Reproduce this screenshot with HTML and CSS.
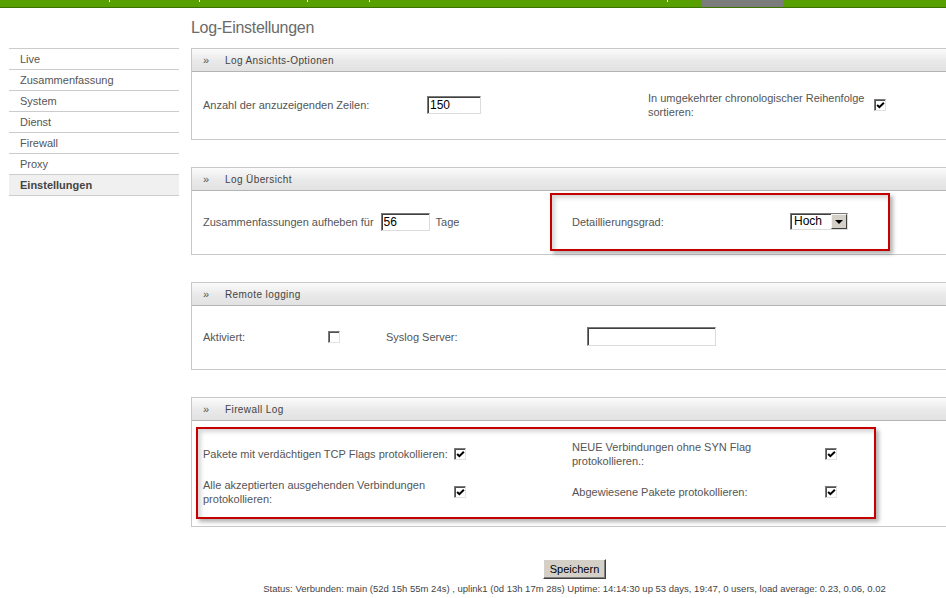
FILE: index.html
```html
<!DOCTYPE html>
<html lang="de">
<head>
    <meta charset="UTF-8">
    <title>Log-Einstellungen</title>
    <link rel="stylesheet" href="styles.css">
</head>
<body>
    <div class="topbar">
        <span class="seg tick"></span>
        <span class="seg tick"></span>
        <span class="seg tick"></span>
        <span class="seg tick"></span>
        <span class="seg tick"></span>
        <span class="seg"></span>
        <span class="seg active"></span>
        <span class="seg"></span>
    </div>

    <div class="page">
        <nav class="sidebar">
            <a href="#">Live</a>
            <a href="#">Zusammenfassung</a>
            <a href="#">System</a>
            <a href="#">Dienst</a>
            <a href="#">Firewall</a>
            <a href="#">Proxy</a>
            <a href="#" class="current">Einstellungen</a>
        </nav>

        <main class="content">
            <h1 class="page-title">Log-Einstellungen</h1>

            <section class="panel">
                <div class="panel-head"><span class="chev">&raquo;</span>Log Ansichts-Optionen</div>
                <div class="panel-body body-view">
                    <div class="row row-view">
                        <label>Anzahl der anzuzeigenden Zeilen:</label>
                        <span><input type="text" class="field field-lines" value="150"></span>
                        <label class="nowrap">In umgekehrter chronologischer Reihenfolge<br>sortieren:</label>
                        <span class="cb checked"><svg viewBox="0 0 8 8"><polyline points="1,3.5 3,5.5 7,1.5"/></svg></span>
                    </div>
                </div>
            </section>

            <section class="panel">
                <div class="panel-head"><span class="chev">&raquo;</span>Log &Uuml;bersicht</div>
                <div class="panel-body body-short">
                    <div class="row row-summary">
                        <div class="inline">
                            <label>Zusammenfassungen aufheben f&uuml;r</label>
                            <input type="text" class="field field-days" value="56">
                            <span>Tage</span>
                        </div>
                        <div class="marked marked-detail">
                            <label>Detaillierungsgrad:</label>
                            <span class="dropdown"><span class="dropdown-value">Hoch</span><span class="dropdown-btn"></span></span>
                        </div>
                    </div>
                </div>
            </section>

            <section class="panel">
                <div class="panel-head"><span class="chev">&raquo;</span>Remote logging</div>
                <div class="panel-body body-short">
                    <div class="row row-remote">
                        <label>Aktiviert:</label>
                        <span class="cb"></span>
                        <label>Syslog Server:</label>
                        <span><input type="text" class="field field-server" value=""></span>
                    </div>
                </div>
            </section>

            <section class="panel">
                <div class="panel-head"><span class="chev">&raquo;</span>Firewall Log</div>
                <div class="panel-body body-firewall">
                    <div class="marked marked-firewall">
                        <label>Pakete mit verd&auml;chtigen TCP Flags protokollieren:</label>
                        <span class="cb checked"><svg viewBox="0 0 8 8"><polyline points="1,3.5 3,5.5 7,1.5"/></svg></span>
                        <label class="nowrap">NEUE Verbindungen ohne SYN Flag<br>protokollieren.:</label>
                        <span class="cb checked"><svg viewBox="0 0 8 8"><polyline points="1,3.5 3,5.5 7,1.5"/></svg></span>

                        <label class="nowrap">Alle akzeptierten ausgehenden Verbindungen<br>protokollieren:</label>
                        <span class="cb checked"><svg viewBox="0 0 8 8"><polyline points="1,3.5 3,5.5 7,1.5"/></svg></span>
                        <label>Abgewiesene Pakete protokollieren:</label>
                        <span class="cb checked"><svg viewBox="0 0 8 8"><polyline points="1,3.5 3,5.5 7,1.5"/></svg></span>
                    </div>
                </div>
            </section>

            <div class="actions">
                <button class="btn">Speichern</button>
            </div>
            <p class="status">Status: Verbunden: main (52d 15h 55m 24s) , uplink1 (0d 13h 17m 28s) Uptime: 14:14:30 up 53 days, 19:47, 0 users, load average: 0.23, 0.06, 0.02</p>
        </main>
    </div>
</body>
</html>
```

FILE: styles.css
```css
html, body {
    overflow: hidden;
}
body {
    margin: 0;
    font-family: "Liberation Sans", Arial, sans-serif;
    font-size: 11px;
    color: #555;
    background: #fff;
}

/* top strip */
.topbar {
    display: grid;
    grid-template-columns: 110px 90px 108px 62px 298px 34px 81px 1fr;
    height: 7px;
    background: #58a000;
    border-bottom: 1px solid #3b7400;
}
.seg {
    position: relative;
}
.seg.tick::after {
    content: "";
    position: absolute;
    right: 0;
    top: 0;
    width: 1px;
    height: 2px;
    background: #fff;
}
.seg.active {
    background: #7c7b7c;
}

.page {
    display: flex;
    align-items: flex-start;
}

/* left menu */
.sidebar {
    flex: none;
    width: 170px;
    margin: 40px 12px 0 9px;
    border-bottom: 1px solid #ccc;
}
.sidebar a {
    display: block;
    height: 20px;
    line-height: 20px;
    padding-left: 11px;
    border-top: 1px solid #ccc;
    color: #555;
    text-decoration: none;
}
.sidebar a.current {
    background: #f0f0f0;
    font-weight: bold;
    color: #444;
}

.content {
    width: 767px;
    flex: none;
}
.page-title {
    margin: 10px 0 10px;
    font-size: 16px;
    line-height: 20px;
    letter-spacing: -0.3px;
    font-weight: normal;
    color: #6a6a6a;
}

/* panels */
.panel {
    border: 1px solid #c8c8c8;
    margin-bottom: 27px;
}
.panel-head {
    height: 22px;
    line-height: 22px;
    padding-left: 11px;
    background: linear-gradient(#fbfbfb, #e9e9e9 55%, #e2e2e2);
    border-bottom: 1px solid #b4b4b4;
    font-size: 10px;
    letter-spacing: 0.4px;
    color: #444;
}
.chev {
    display: inline-block;
    width: 22px;
    font-size: 11px;
    letter-spacing: 0;
    color: #555;
}
.panel-body {
    box-sizing: border-box;
    display: flex;
    align-items: center;
    padding-left: 11px;
    padding-bottom: 2px;
}
.body-view {
    height: 67px;
}
.body-short {
    height: 63px;
}
.body-firewall {
    height: 105px;
    padding-left: 4px;
}

.row {
    display: grid;
    align-items: center;
    line-height: 14px;
}
.nowrap {
    white-space: nowrap;
}
.row-view {
    grid-template-columns: 224px 221px 226px auto;
}
.row-summary {
    grid-template-columns: 347px auto;
}
.row-remote {
    grid-template-columns: 125px 58px 201px auto;
}
.inline {
    display: flex;
    align-items: center;
}

/* red annotation frames */
.marked {
    box-sizing: border-box;
    border: 2px solid #c40000;
    box-shadow: 3px 3px 4px rgba(0, 0, 0, 0.3), inset 3px 3px 4px rgba(0, 0, 0, 0.16);
}
.marked-detail {
    display: grid;
    grid-template-columns: 218px auto;
    align-items: center;
    width: 340px;
    height: 58px;
    padding-left: 20px;
}
.marked-firewall {
    display: grid;
    grid-template-columns: 251px 118px 253px auto;
    grid-template-rows: 28px 28px;
    row-gap: 10px;
    align-items: center;
    align-content: center;
    width: 680px;
    height: 92px;
    padding-left: 5px;
    line-height: 14px;
}

/* form controls, classic look */
.field {
    box-sizing: border-box;
    height: 18px;
    padding: 0 2px;
    font-family: "Liberation Sans", Arial, sans-serif;
    font-size: 12px;
    color: #000;
    background: #fff;
    border: 1px solid;
    border-color: #7a7a7a #dcdcdc #dcdcdc #7a7a7a;
    box-shadow: inset 1px 1px 0 #404040;
    outline: none;
    vertical-align: middle;
}
.field-lines {
    width: 54px;
}
.field-days {
    width: 49px;
    margin: 0 6px 0 7px;
}
.field-server {
    width: 129px;
    height: 19px;
}

.cb {
    box-sizing: border-box;
    display: inline-block;
    width: 12px;
    height: 12px;
    background: #fff;
    border: 1px solid;
    border-color: #7a7a7a #e2e2e2 #e2e2e2 #7a7a7a;
    box-shadow: inset 1px 1px 0 #505050;
}
.cb svg {
    display: block;
    width: 9px;
    height: 9px;
    margin: 1px 0 0 1px;
    fill: none;
    stroke: #000;
    stroke-width: 1.8;
}

.dropdown {
    box-sizing: border-box;
    display: flex;
    width: 58px;
    height: 17px;
    background: #fff;
    border: 1px solid;
    border-color: #7a7a7a #dcdcdc #dcdcdc #7a7a7a;
    box-shadow: inset 1px 1px 0 #404040;
}
.dropdown-value {
    flex: 1;
    padding-left: 3px;
    font-size: 12px;
    line-height: 15px;
    color: #000;
}
.dropdown-btn {
    box-sizing: border-box;
    position: relative;
    width: 16px;
    background: #d4d0c8;
    border: 1px solid;
    border-color: #f4f4f4 #404040 #404040 #f4f4f4;
}
.dropdown-btn::after {
    content: "";
    position: absolute;
    left: 3px;
    top: 5px;
    border-left: 4px solid transparent;
    border-right: 4px solid transparent;
    border-top: 4px solid #000;
}

.actions {
    text-align: center;
    margin-top: 32px;
}
.btn {
    width: 63px;
    height: 20px;
    padding: 0;
    font-family: "Liberation Sans", Arial, sans-serif;
    font-size: 11px;
    color: #000;
    background: #d4d0c8;
    border: 1px solid;
    border-color: #fff #404040 #404040 #fff;
    box-shadow: inset -1px -1px 0 #808080;
}
.status {
    margin: 4px 0 0;
    text-align: center;
    font-size: 9.5px;
    color: #444;
}
```
